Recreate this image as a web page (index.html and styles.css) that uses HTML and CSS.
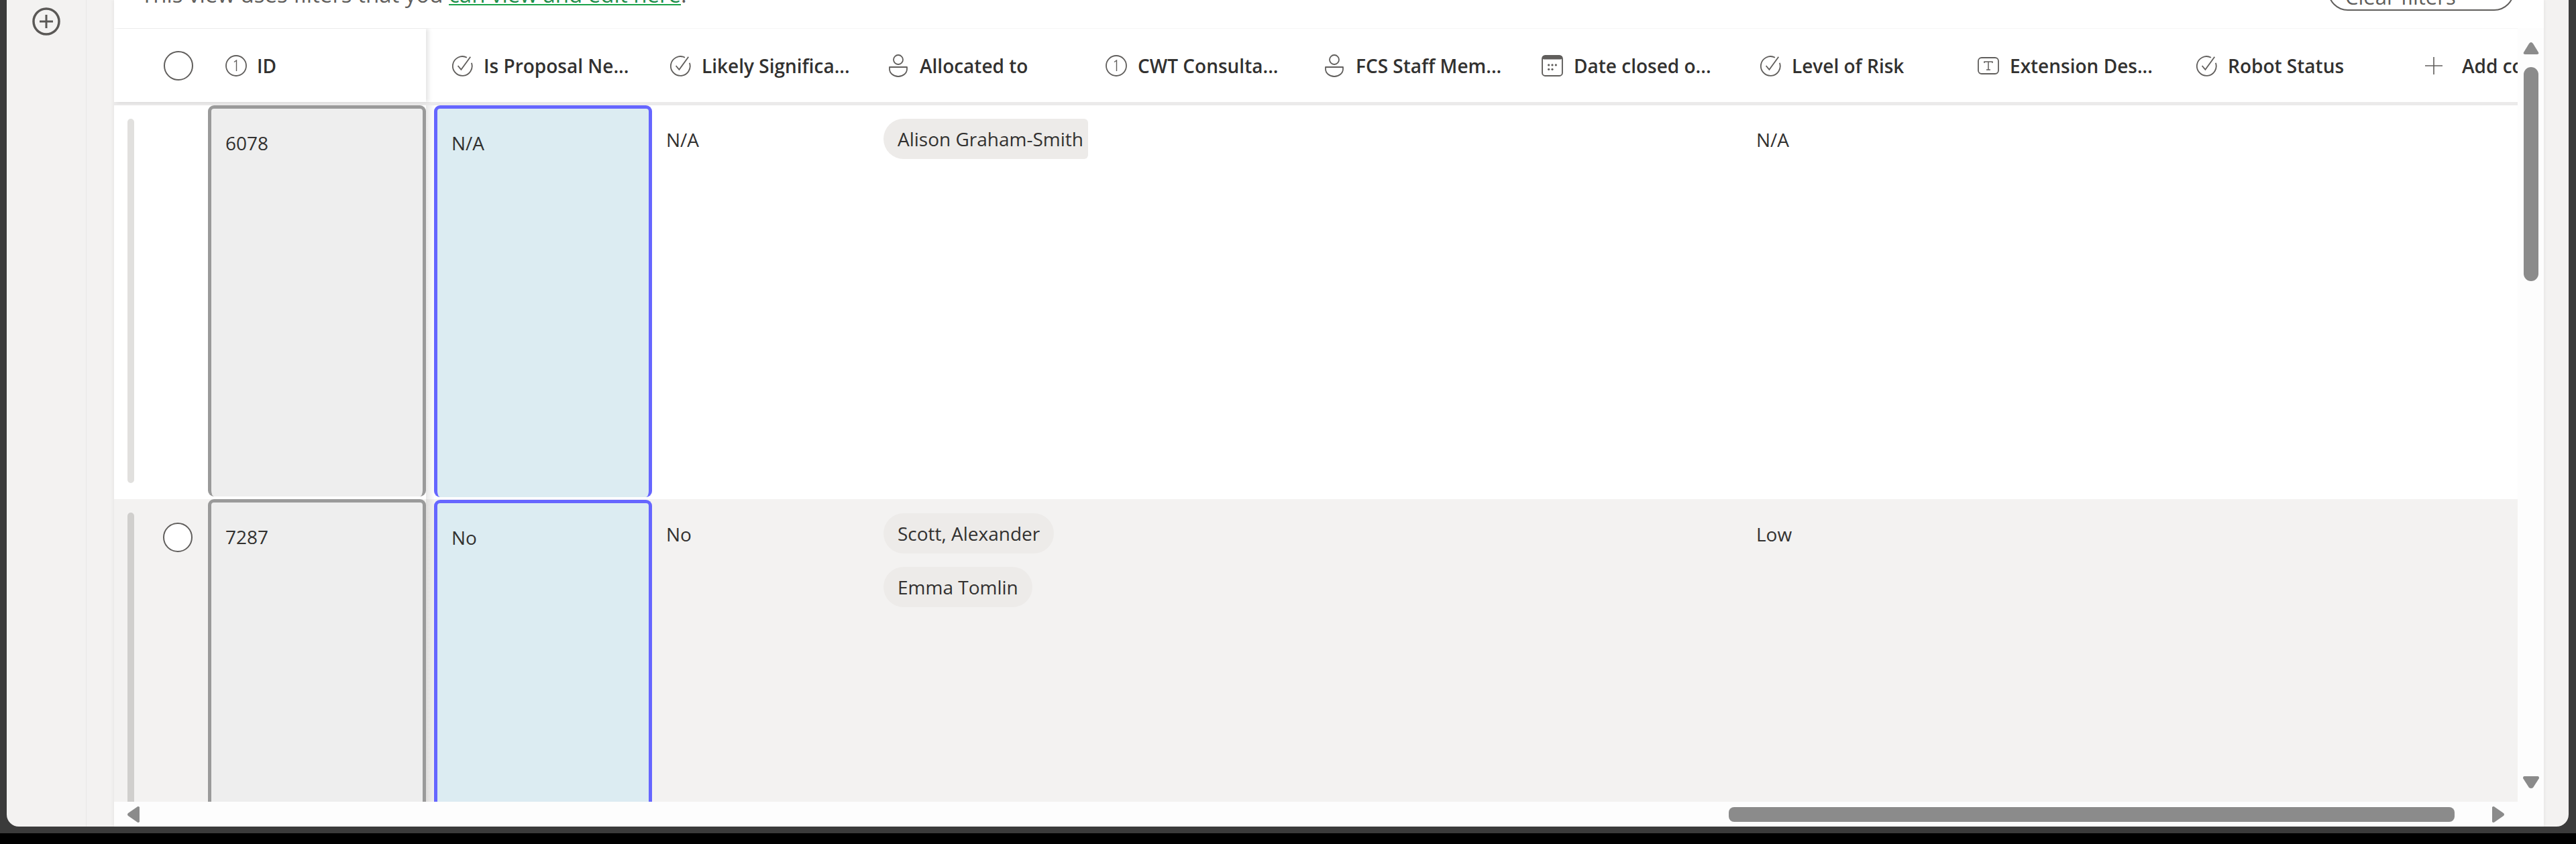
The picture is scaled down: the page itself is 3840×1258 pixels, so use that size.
FILE: index.html
```html
<!DOCTYPE html>
<html>
    <head>
        <title>List view</title>
        <link rel="stylesheet" href="styles.css">
    </head>

    <body>
        <svg class="sprite" width="0" height="0">
            <symbol id="i-check" viewBox="0 0 30 30">
                <path d="M21.500 3.500A13.500 13.500 0 1 0 28 11" fill="none" stroke="#605e5c" stroke-width="1.700"/>
                <path d="M9 15l4.500 5.500L26.500 2.500" fill="none" stroke="#605e5c" stroke-width="1.700"/>
            </symbol>
            <symbol id="i-number" viewBox="0 0 32 32">
                <circle cx="16" cy="16" r="15" fill="none" stroke="#605e5c" stroke-width="1.800"/>
                <path d="M13 10.500l3.500-2.500V24" fill="none" stroke="#605e5c" stroke-width="1.400"/>
            </symbol>
            <symbol id="i-person" viewBox="0 0 30 34">
                <circle cx="15" cy="8" r="7" fill="none" stroke="#605e5c" stroke-width="1.800"/>
                <path d="M2 19h26v3c0 6-6 11-13 11S2 28 2 22z" fill="none" stroke="#605e5c" stroke-width="1.800" stroke-linejoin="round"/>
            </symbol>
            <symbol id="i-date" viewBox="0 0 30 30">
                <rect x="1" y="1" width="28" height="28" rx="4" fill="none" stroke="#605e5c" stroke-width="1.800"/>
                <rect x="1" y="1" width="28" height="5" rx="2.500" fill="#605e5c"/>
                <g fill="#605e5c">
                    <circle cx="10" cy="14" r="1.500"/>
                    <circle cx="15" cy="14" r="1.500"/>
                    <circle cx="20" cy="14" r="1.500"/>
                    <circle cx="10" cy="20" r="1.500"/>
                    <circle cx="15" cy="20" r="1.500"/>
                </g>
            </symbol>
            <symbol id="i-text" viewBox="0 0 32 26">
                <rect x="1" y="1" width="30" height="24" rx="5" fill="none" stroke="#605e5c" stroke-width="1.800"/>
                <path d="M10 9V7h12v2M16 7v12M13 19h6" fill="none" stroke="#605e5c" stroke-width="1.500"/>
            </symbol>
        </svg>

        <div class="window">
            <div class="app">
                <!-- left rail -->
                <nav class="rail">
                    <svg class="rail-add" width="42" height="42" viewBox="0 0 42 42">
                        <circle cx="21" cy="21" r="19" fill="none" stroke="#5a5856" stroke-width="3.500"/>
                        <path d="M21 11v20M11 21h20" stroke="#5a5856" stroke-width="3"/>
                    </svg>
                </nav>

                <main class="panel">
                    <div class="filterbar">
                        <p class="filter-note">This view uses filters that you <a href="#">can view and edit here</a>.</p>
                        <button class="clear-btn">Clear filters</button>
                    </div>

                    <div class="table-wrap">
                        <div class="table">
                            <!-- header row -->
                            <div class="head">
                                <div class="head-frozen">
                                    <span class="radio"></span>
                                    <div class="head-id">
                                        <svg class="icon"><use href="#i-number"/></svg>
                                        <span>ID</span>
                                    </div>
                                </div>
                                <div class="head-cell"><svg class="icon"><use href="#i-check"/></svg><span>Is Proposal Ne...</span></div>
                                <div class="head-cell"><svg class="icon"><use href="#i-check"/></svg><span>Likely Significa...</span></div>
                                <div class="head-cell"><svg class="icon"><use href="#i-person"/></svg><span>Allocated to</span></div>
                                <div class="head-cell"><svg class="icon"><use href="#i-number"/></svg><span>CWT Consulta...</span></div>
                                <div class="head-cell"><svg class="icon"><use href="#i-person"/></svg><span>FCS Staff Mem...</span></div>
                                <div class="head-cell"><svg class="icon"><use href="#i-date"/></svg><span>Date closed o...</span></div>
                                <div class="head-cell"><svg class="icon"><use href="#i-check"/></svg><span>Level of Risk</span></div>
                                <div class="head-cell"><svg class="icon"><use href="#i-text"/></svg><span>Extension Des...</span></div>
                                <div class="head-cell"><svg class="icon"><use href="#i-check"/></svg><span>Robot Status</span></div>
                                <div class="head-add">
                                    <svg class="plus" width="26" height="26" viewBox="0 0 26 26"><path d="M13 0v26M0 13h26" stroke="#605e5c" stroke-width="1.600"/></svg>
                                    <span>Add column</span>
                                </div>
                            </div>

                            <!-- first record -->
                            <div class="row row-first">
                                <div class="select">
                                    <span class="row-bar"></span>
                                </div>
                                <div class="frozen"><div class="cell cell-id">6078</div></div>
                                <div class="cell cell-edit">N/A</div>
                                <div class="plain">N/A</div>
                                <div class="people">
                                    <span class="chip chip-cut">Alison Graham-Smith</span>
                                </div>
                                <div class="blank"></div>
                                <div class="blank"></div>
                                <div class="blank"></div>
                                <div class="plain">N/A</div>
                            </div>

                            <!-- second record -->
                            <div class="row row-second">
                                <div class="select">
                                    <span class="row-bar"></span>
                                    <span class="radio radio-row"></span>
                                </div>
                                <div class="frozen"><div class="cell cell-id">7287</div></div>
                                <div class="cell cell-edit">No</div>
                                <div class="plain">No</div>
                                <div class="people">
                                    <span class="chip">Scott, Alexander</span>
                                    <span class="chip">Emma Tomlin</span>
                                </div>
                                <div class="blank"></div>
                                <div class="blank"></div>
                                <div class="blank"></div>
                                <div class="plain">Low</div>
                            </div>
                        </div>

                        <!-- vertical scrollbar -->
                        <div class="vscroll">
                            <svg class="arrow-up" width="24" height="18" viewBox="0 0 24 18"><path d="M9 2q3-4 6 0l8 13q1 3-2 3H3q-3 0-2-3z" fill="#8b8b8b"/></svg>
                            <div class="vthumb"></div>
                            <svg class="arrow-down" width="24" height="18" viewBox="0 0 24 18"><path d="M2 0h20q2 0 2 3l-9 14q-3 2-6 0L0 3q0-3 2-3z" fill="#8b8b8b"/></svg>
                        </div>
                    </div>

                    <!-- horizontal scrollbar -->
                    <div class="hscroll">
                        <svg class="arrow-left" width="18" height="24" viewBox="0 0 18 24"><path d="M18 1v22q-2 2-4 0L1 14q-2-2 0-4L14 1q2-2 4 0z" fill="#8b8b8b"/></svg>
                        <div class="hthumb"></div>
                        <svg class="arrow-right" width="18" height="24" viewBox="0 0 18 24"><path d="M0 1v22q2 2 4 0l13-9q2-2 0-4L4 1Q2-1 0 1z" fill="#8b8b8b"/></svg>
                    </div>
                </main>
            </div>
        </div>
    </body>
</html>
```

FILE: styles.css
```css
/* Page */
html, body {
    margin: 0;
    height: 1258px;
    overflow: hidden;
    background-color: #000;
    font-family: "Open Sans", "Noto Sans", sans-serif;
    font-size: 28px;
    color: #323130;
}

.sprite {
    position: absolute;
}

/* Dark window frame */
.window {
    height: 1232px;
    padding: 0 11px 10px 10px;
    background-color: #3b3b3b;
}

.app {
    display: flex;
    height: 1232px;
    background-color: #f3f2f1;
    border-radius: 0 0 18px 18px;
    overflow: hidden;
}

/* Left rail */
.rail {
    width: 119px;
    flex: none;
    margin-right: 41px;
    border-right: 1px solid #e9e8e6;
    display: flex;
    justify-content: center;
    align-items: flex-start;
    padding-top: 11px;
    box-sizing: border-box;
}

/* White panel */
.panel {
    width: 3622px;
    flex: none;
    display: flex;
    flex-direction: column;
    background-color: #fff;
    box-shadow: 0 0 6px rgba(0, 0, 0, 0.08);
}

/* Filter note */
.filterbar {
    height: 42px;
    flex: none;
    box-sizing: border-box;
    display: flex;
    justify-content: space-between;
    align-items: flex-end;
    padding: 0 44px 26px 40px;
    overflow: hidden;
}

.filter-note {
    margin: 0 0 4px 0;
    font-size: 33px;
    line-height: 40px;
    white-space: nowrap;
    color: #605e5c;
}

.filter-note a {
    color: #1e8f4a;
    text-decoration: underline;
    text-decoration-color: #1aa34a;
    text-decoration-thickness: 2px;
    text-underline-offset: 2px;
}

.clear-btn {
    width: 278px;
    height: 60px;
    flex: none;
    font: inherit;
    font-size: 31px;
    color: #605e5c;
    background-color: #fff;
    border: 2px solid #605e5c;
    border-radius: 30px;
    text-align: left;
    padding: 16px 0 0 24px;
}

/* Table */
.table-wrap {
    height: 1153px;
    flex: none;
    display: flex;
}

.table {
    width: 3583px;
    flex: none;
    overflow: hidden;
}

.head {
    display: flex;
    height: 115px;
    box-sizing: border-box;
    border-top: 1px solid #f6f6f6;
    border-bottom: 5px solid #ebeaea;
}

.head-frozen {
    width: 465px;
    flex: none;
    display: flex;
    align-items: center;
    padding-left: 74px;
    box-sizing: border-box;
    box-shadow: 4px 0 6px rgba(0, 0, 0, 0.1);
    position: relative;
}

.head-id {
    display: flex;
    align-items: center;
    gap: 15px;
    margin-left: 48px;
    font-weight: 600;
}

.head-cell {
    width: 325px;
    flex: none;
    box-sizing: border-box;
    padding-left: 38px;
    display: flex;
    align-items: center;
    gap: 16px;
    font-weight: 600;
    white-space: nowrap;
}

.head-add {
    flex: none;
    display: flex;
    align-items: center;
    gap: 29px;
    padding-left: 55px;
    font-weight: 600;
    white-space: nowrap;
}

.icon {
    width: 32px;
    height: 34px;
    flex: none;
}

.plus {
    flex: none;
}

.radio {
    width: 44px;
    height: 44px;
    flex: none;
    box-sizing: border-box;
    border: 2px solid #605e5c;
    border-radius: 50%;
    background-color: #fff;
}

/* Rows */
.row {
    display: flex;
    align-items: stretch;
}

.row-first {
    height: 587px;
}

.row-second {
    height: 620px;
    background-color: #f3f2f1;
}

.select {
    width: 140px;
    flex: none;
    box-sizing: border-box;
    display: flex;
    align-items: flex-start;
    padding-left: 20px;
}

.row-bar {
    width: 10px;
    align-self: stretch;
    margin: 20px 0 24px 0;
    border-radius: 5px;
    background-color: #e1e0de;
}

.row-second .row-bar {
    background-color: #d0cfcd;
}

.radio-row {
    margin: 35px 0 0 43px;
}

.frozen {
    width: 337px;
    flex: none;
    background: linear-gradient(to right, rgba(0, 0, 0, 0.09), rgba(0, 0, 0, 0.01)) no-repeat right top / 12px 100%;
    display: flex;
}

.cell {
    width: 325px;
    flex: none;
    box-sizing: border-box;
    border: 5px solid #9a9a9a;
    border-bottom-width: 0;
    border-radius: 9px;
    padding: 31px 21px 0 21px;
    line-height: 40px;
    margin-bottom: 4px;
}

.cell-id {
    background-color: #eeeeee;
}

.cell-edit {
    border-color: #6666ff;
    background-color: #dcecf2;
    margin-bottom: 3px;
}

.row-second .cell-edit {
    margin-top: 1px;
}

.plain {
    width: 325px;
    flex: none;
    box-sizing: border-box;
    padding: 31px 0 0 33px;
    line-height: 40px;
}

.row > .plain:nth-child(4) {
    width: 313px;
    padding-left: 21px;
}

.row-second .plain {
    padding-top: 32px;
}

.blank {
    width: 325px;
    flex: none;
}

.people {
    width: 325px;
    flex: none;
    box-sizing: border-box;
    padding: 20px 0 0 32px;
    display: flex;
    flex-direction: column;
    align-items: flex-start;
    gap: 20px;
}

.row-second .people {
    padding-top: 21px;
}

.chip {
    height: 60px;
    line-height: 60px;
    padding: 0 21px;
    border-radius: 30px;
    background-color: #edebe9;
    white-space: nowrap;
}

.chip-cut {
    width: 305px;
    box-sizing: border-box;
    padding-right: 0;
    border-radius: 30px 6px 6px 30px;
    overflow: hidden;
}

/* Scrollbars */
.vscroll {
    width: 39px;
    flex: none;
    display: flex;
    flex-direction: column;
    align-items: center;
    background-color: #fdfdfd;
}

.arrow-up {
    margin-top: 21px;
    flex: none;
}

.vthumb {
    width: 22px;
    height: 319px;
    margin-top: 19px;
    flex: none;
    border-radius: 11px;
    background-color: #8b8b8b;
}

.arrow-down {
    margin-top: auto;
    margin-bottom: 20px;
    flex: none;
}

.hscroll {
    height: 37px;
    flex: none;
    display: flex;
    align-items: center;
    padding: 0 59px 0 20px;
    background-color: #fdfdfd;
}

.hthumb {
    width: 1082px;
    height: 22px;
    margin-left: auto;
    border-radius: 8px;
    background-color: #8b8b8b;
}

.arrow-right {
    margin-left: 56px;
    flex: none;
}

.arrow-left {
    flex: none;
}
```
